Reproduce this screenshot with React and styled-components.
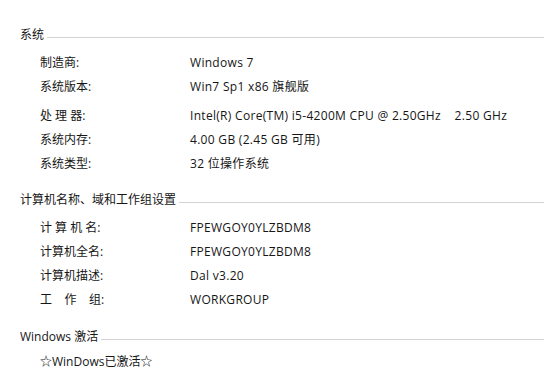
import React from "react";
import styled, { createGlobalStyle } from "styled-components";

const Global = createGlobalStyle`
  html, body { margin: 0; padding: 0; background: #ffffff; }
  body {
    font-family: "Open Sans", "Noto Sans CJK SC", sans-serif;
    font-size: 12px;
    color: #161616;
  }
`;

const Page = styled.div`
  width: 544px;
  height: 376px;
  overflow: hidden;
  padding: 27px 0 0 20px;
  box-sizing: border-box;
  display: flex;
  flex-direction: column;
`;

const Section = styled.section`
  display: flex;
  flex-direction: column;
  margin-top: ${(p) => p.$top || 0}px;
`;

const Header = styled.div`
  display: flex;
  align-items: center;
  height: 16px;
  line-height: 16px;
  margin-bottom: ${(p) => (p.$tight ? 5 : 8)}px;
`;

const HeaderText = styled.span`
  white-space: nowrap;
`;

const Rule = styled.div`
  flex: 1;
  height: 1px;
  background: #d3d3d3;
  margin: 5px 0 0 3px;
`;

const Rows = styled.div`
  display: grid;
  grid-template-columns: 150px 1fr;
  padding-left: 20px;
`;

const Label = styled.div`
  height: 24px;
  line-height: 24px;
  margin-top: ${(p) => p.$gap || 0}px;
  white-space: pre;
`;

const Value = styled.div`
  height: 24px;
  line-height: 24px;
  margin-top: ${(p) => p.$gap || 0}px;
  white-space: pre;
  letter-spacing: 0.3px;
`;

const Single = styled.div`
  padding-left: 20px;
  height: 24px;
  line-height: 24px;
`;

const sections = [
  {
    title: "系统",
    rows: [
      ["制造商:", "Windows 7"],
      ["系统版本:", "Win7 Sp1 x86 旗舰版"],
      ["处 理 器:", "Intel(R) Core(TM) i5-4200M CPU @ 2.50GHz    2.50 GHz", 5],
      ["系统内存:", "4.00 GB (2.45 GB 可用)"],
      ["系统类型:", "32 位操作系统"],
    ],
  },
  {
    title: "计算机名称、域和工作组设置",
    top: 16,
    rows: [
      ["计 算 机 名:", "FPEWGOY0YLZBDM8"],
      ["计算机全名:", "FPEWGOY0YLZBDM8"],
      ["计算机描述:", "Dal v3.20"],
      ["工    作    组:", "WORKGROUP"],
    ],
  },
];

export default function App() {
  return (
    <>
      <Global />
      <Page>
        {sections.map((s) => (
          <Section key={s.title} $top={s.top}>
            <Header>
              <HeaderText>{s.title}</HeaderText>
              <Rule />
            </Header>
            <Rows>
              {s.rows.map(([l, v, g]) => (
                <React.Fragment key={l}>
                  <Label $gap={g}>{l}</Label>
                  <Value $gap={g}>{v}</Value>
                </React.Fragment>
              ))}
            </Rows>
          </Section>
        ))}
        <Section $top={17}>
          <Header $tight>
            <HeaderText>Windows 激活</HeaderText>
            <Rule />
          </Header>
          <Single>☆WinDows已激活☆</Single>
        </Section>
      </Page>
    </>
  );
}
